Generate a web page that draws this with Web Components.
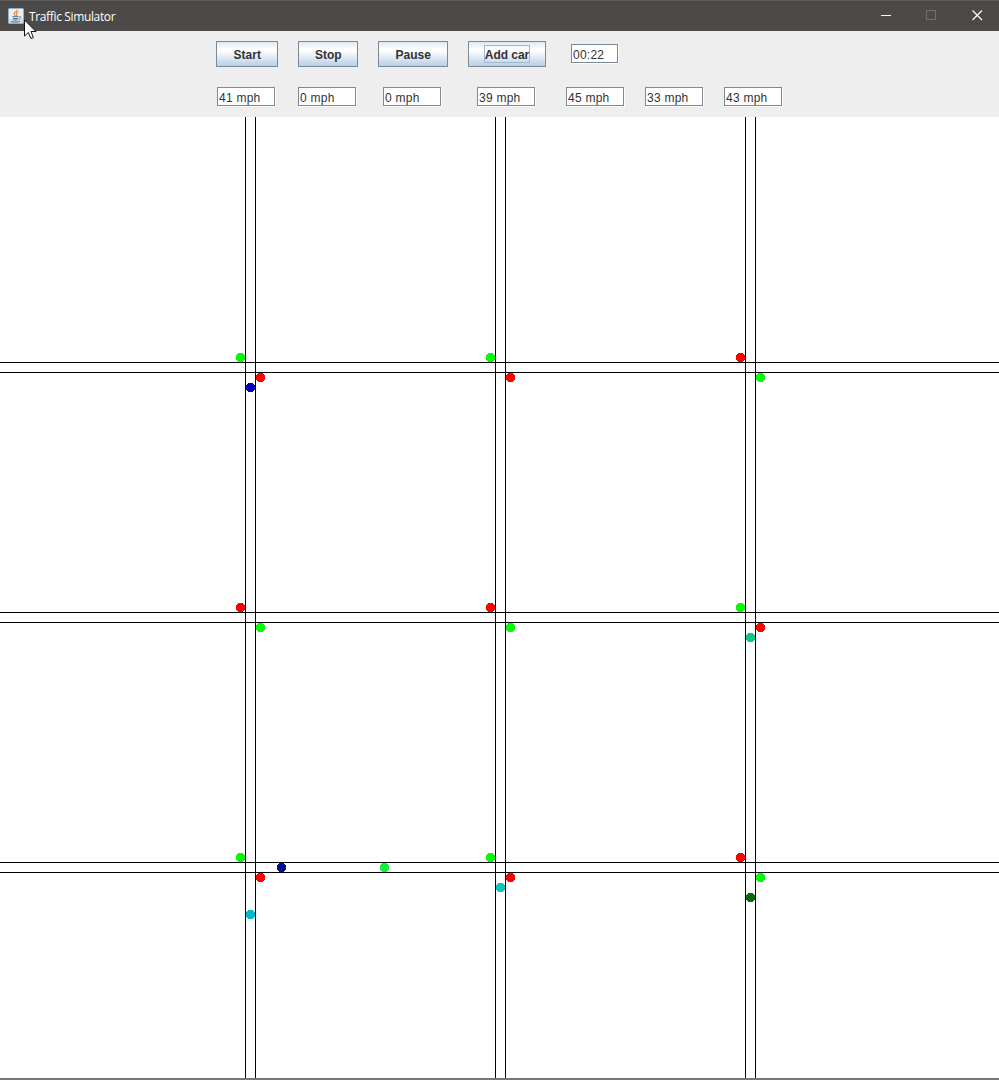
<!DOCTYPE html>
<html lang="en">
<head>
<meta charset="utf-8">
<title>Traffic Simulator</title>
<style>
html, body { margin: 0; height: 100%; overflow: hidden; background: #fff; }
body { font-family: "Liberation Sans", Arial, sans-serif; }
</style>
</head>
<body>
<traffic-app></traffic-app>
<script>
function define(name, html, setup) {
  const template = document.createElement('template');
  template.innerHTML = html;
  customElements.define(name, class extends HTMLElement {
    constructor() {
      super();
      this.attachShadow({ mode: 'open' }).append(template.content.cloneNode(true));
    }
    connectedCallback() { if (setup) setup(this, this.shadowRoot); }
  });
}

define('title-bar', `
<style>
:host { display: flex; align-items: center; position: relative; z-index: 2; box-sizing: border-box; height: 31px; background: #4b4a48; border-top: 1px solid #5d5c5a; color: #fff; }
.logo { width: 16px; height: 16px; margin: -1px 5px 0 8px; display: block; }
.name { font: 12px/16px "Open Sans", "Noto Sans", sans-serif; letter-spacing: -.36px; flex: 1; margin-top: 1px; white-space: nowrap; }
.controls { display: grid; grid-template-columns: repeat(3, 46px); justify-items: center; margin-right: -1px; }
.controls svg { width: 11px; height: 11px; display: block; margin-top: -2px; }
.controls svg:first-child { margin-left: 2px; }
.cursor { position: absolute; left: 24px; top: 18px; width: 13px; height: 21px; }
</style>
<svg class="logo" viewBox="0 0 16 16">
  <rect x=".5" y=".5" width="15" height="15" rx="1" fill="#e9eff4" stroke="#8fb0cc"/>
  <path d="M1 11H15V15H1Z" fill="#cbdce9"/>
  <path d="M9.3 1.7C9.6 4 5.2 4.2 6.1 6.2C6.4 7 7.3 7.4 7.3 8.2M10.5 4C8 5 8 6 8.6 6.6C9.1 7.2 8.6 7.9 8 8.3" fill="none" stroke="#e8872e" stroke-width="1.1"/>
  <path d="M4.3 8.7H10.5M4.8 10.5H10.1M5.5 12H9.4M3 13.6C5.4 14.3 10 14.3 12 13.4M10.7 8.7C13.6 8.1 13.2 10.6 10.7 11.2" fill="none" stroke="#4d7594" stroke-width="1"/>
</svg>
<span class="name"><slot></slot></span>
<div class="controls">
  <svg viewBox="0 0 11 11"><path d="M0 5.5H10" stroke="#fff"/></svg>
  <svg viewBox="0 0 11 11"><path d="M.5 .5H9.5V9.5H.5Z" fill="none" stroke="#73726f"/></svg>
  <svg viewBox="0 0 11 11"><path d="M.5 .5L10 10M10 .5L.5 10" stroke="#fff" stroke-width="1.2"/></svg>
</div>
<svg class="cursor" viewBox="0 0 13 21"><path d="M.5 1V17L4.3 13.5L6.9 19.5L9.4 18.4L6.9 12.5H12Z" fill="#fff" stroke="#111" stroke-width="1"/></svg>
`);

define('swing-button', `
<style>
:host { display: flex; align-items: center; justify-content: center; box-sizing: border-box; height: 26px; border: 1px solid #7a8a99; background: linear-gradient(#dde8f3 0, #fff 30%, #fff 36%, #b8cfe5 100%); color: #333; font: bold 12px/14px "Liberation Sans", Arial, sans-serif; white-space: nowrap; }
span { padding: 2px 0 0 .5px; border: 1px solid transparent; }
:host([focused]) span { border-color: #a3b8cc; padding-left: 0; letter-spacing: -.04px; }
</style>
<span><slot></slot></span>`);

define('swing-field', `
<style>
:host { display: block; box-sizing: border-box; width: 58px; height: 19px; padding-left: 1px; border: 1px solid #7a8a99; background: #fff; box-shadow: 1px 1px #fff; color: #333; font: 12px/21px "Liberation Sans", Arial, sans-serif; letter-spacing: .25px; white-space: nowrap; }
</style>
<slot></slot>`);

define('control-panel', `
<style>
:host { display: block; box-sizing: border-box; height: 86px; padding-top: 10px; background: #eee; }
.row { display: grid; }
.buttons { grid-template-columns: 62px 60px 70px 78px 47px; column-gap: 20px; margin-left: 216px; align-items: center; }
.buttons swing-field { width: 47px; margin-left: 5px; margin-top: -1px; }
.speeds { grid-template-columns: 81px 85px 94px 89px 79px 79px 58px; margin: 20px 0 0 217px; }
</style>
<div class="row buttons">
  <swing-button>Start</swing-button>
  <swing-button>Stop</swing-button>
  <swing-button>Pause</swing-button>
  <swing-button focused>Add car</swing-button>
  <swing-field>00:22</swing-field>
</div>
<div class="row speeds">
  <swing-field>41 mph</swing-field>
  <swing-field>0 mph</swing-field>
  <swing-field>0 mph</swing-field>
  <swing-field>39 mph</swing-field>
  <swing-field>45 mph</swing-field>
  <swing-field>33 mph</swing-field>
  <swing-field>43 mph</swing-field>
</div>`);

const ROADS_X = [245, 495, 745];
const ROADS_Y = [245, 495, 745];
// One character per junction: whether the north-west lamp is green or red.
const LAMPS = ['ggr', 'rrg', 'ggr'];
const CARS = [
  [250, 270, '#0000be'], [750, 520, '#0acb82'], [281, 750, '#00108f'],
  [384, 750, '#0af53c'], [250, 797, '#05b9c9'], [500, 770, '#0ac8b9'], [750, 780, '#006e0a']
];

define('road-map', `
<style>
:host { display: block; background: #fff; }
svg { display: block; width: 999px; height: 961px; }
</style>
<svg viewBox="0 0 999 961" shape-rendering="crispEdges"></svg>`, (host, root) => {
  const dot = (x, y, color) => `<circle cx="${x + .5}" cy="${y + .5}" r="4.8" fill="${color}"/>`;
  let s = '';
  for (const x of ROADS_X) s += `<path d="M${x} 0h1V961h-1zM${x + 10} 0h1V961h-1z"/>`;
  for (const y of ROADS_Y) s += `<path d="M0 ${y}H999v1H0zM0 ${y + 10}H999v1H0z"/>`;
  ROADS_Y.forEach((y, r) => ROADS_X.forEach((x, c) => {
    const green = LAMPS[r][c] === 'g';
    s += dot(x - 5, y - 5, green ? '#0f0' : '#f00') + dot(x + 15, y + 15, green ? '#f00' : '#0f0');
  }));
  for (const car of CARS) s += dot(...car);
  root.querySelector('svg').innerHTML = s;
});

define('traffic-app', `
<style>
:host { display: flex; flex-direction: column; box-sizing: border-box; width: 999px; height: 1080px; border-bottom: 2px solid #777; }
road-map { flex: 1; }
</style>
<title-bar>Traffic Simulator</title-bar>
<control-panel></control-panel>
<road-map></road-map>`);
</script>
</body>
</html>
